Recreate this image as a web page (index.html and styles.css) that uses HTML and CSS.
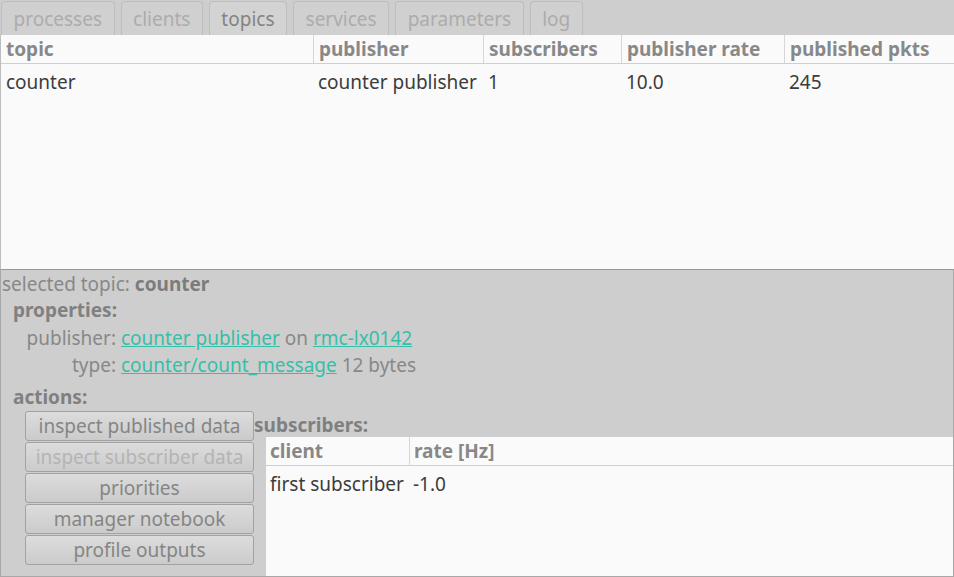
FILE: index.html
```html
<!DOCTYPE html>
<html lang="en">
<head>
<meta charset="UTF-8" />
<title>topics</title>
<link rel="stylesheet" href="styles.css">
</head>
<body>

<div class="tabs">
  <div class="tab">processes</div>
  <div class="tab">clients</div>
  <div class="tab active">topics</div>
  <div class="tab">services</div>
  <div class="tab">parameters</div>
  <div class="tab">log</div>
</div>

<div class="topics">
  <div class="row head">
    <div class="c1">topic</div>
    <div class="c2">publisher</div>
    <div class="c3">subscribers</div>
    <div class="c4">publisher rate</div>
    <div class="c5">published pkts</div>
  </div>
  <div class="row">
    <div class="c1">counter</div>
    <div class="c2">counter publisher</div>
    <div class="c3">1</div>
    <div class="c4">10.0</div>
    <div class="c5">245</div>
  </div>
</div>

<div class="detail">
  <div class="selected">selected topic: <b>counter</b></div>
  <div class="section">properties:</div>
  <div class="props">
    <span class="key">publisher:</span>
    <span><a href="#">counter publisher</a> on <a href="#">rmc-lx0142</a></span>
    <span class="key">type:</span>
    <span><a href="#">counter/count_message</a> 12 bytes</span>
  </div>
  <div class="section">actions:</div>
  <div class="lower">
    <div class="buttons">
      <button>inspect published data</button>
      <button disabled>inspect subscriber data</button>
      <button>priorities</button>
      <button>manager notebook</button>
      <button>profile outputs</button>
    </div>
    <div class="subs">
      <div class="subs-title">subscribers:</div>
      <div class="subs-table">
        <div class="srow head">
          <div class="s1">client</div>
          <div class="s2">rate [Hz]</div>
        </div>
        <div class="srow">
          <div class="s1">first subscriber</div>
          <div class="s2">-1.0</div>
        </div>
      </div>
    </div>
  </div>
</div>

</body>
</html>
```

FILE: styles.css
```css
body { margin: 0; background: #cecece; font-family: "Noto Sans", "Open Sans", sans-serif; font-size: 19px; color: #888; height: 577px; overflow: hidden; }

.tabs { display: flex; height: 35px; padding-left: 1px; gap: 6px; align-items: flex-end; }
.tab { height: 34px; box-sizing: border-box; border: 1px solid #bdbdbd; border-bottom: none; border-radius: 4px 4px 0 0; padding: 0 11.5px; line-height: 34px; color: #acacac; background: #d0d0d0; }
.tab.active { color: #838383; background: #d3d3d3; }

.topics { height: 235px; background: #fafafa; border-left: 1px solid #bdbdbd; border-bottom: 1px solid #999; box-sizing: border-box; }
.row { display: flex; height: 36px; align-items: center; color: #3c3c3c; }
.row.head { height: 28px; border-bottom: 1px solid #cfcfcf; color: #888; font-weight: bold; }
.row > div { box-sizing: border-box; padding-left: 5px; height: 100%; display: flex; align-items: center; }
.row.head > div + div { border-left: 1px solid #d6d6d6; }
.c1 { width: 312px; }
.c2 { width: 170px; }
.c3 { width: 138px; }
.c4 { width: 163px; }
.c5 { flex: 1; }

.detail { height: 307px; box-sizing: border-box; border-left: 1px solid #a8a8a8; border-right: 1px solid #a8a8a8; border-bottom: 1px solid #a8a8a8; display: flex; flex-direction: column; }
.selected { height: 27px; line-height: 29px; padding-left: 1px; }
.selected b { color: #7c7c7c; }
.section { height: 27px; line-height: 27px; padding-left: 12px; font-weight: bold; color: #808080; }
.props { display: grid; grid-template-columns: 120px auto; justify-content: start; padding: 0 0 6px 0; }
.props span { height: 27px; line-height: 28px; white-space: pre; }
.props .key { text-align: right; padding-right: 5px; }
.props a { color: #36bfa8; }

.lower { display: flex; flex: 1; align-items: stretch; }
.buttons { display: flex; flex-direction: column; gap: 1px; padding: 0 0 0 24px; width: 229px; }
.buttons button { height: 30px; font-family: inherit; font-size: 19px; color: #858585; border: 1px solid #a2a2a2; border-radius: 3px; background: linear-gradient(#dcdcdc, #cbcbcb); padding: 0; }
.buttons button:disabled { color: #b4b4b4; }

.subs { flex: 1; display: flex; flex-direction: column; }
.subs-title { height: 26px; line-height: 28px; font-weight: bold; color: #808080; }
.subs-table { flex: 1; margin-left: 12px; background: #fafafa; }
.srow { display: flex; height: 36px; align-items: center; color: #3c3c3c; }
.srow.head { height: 28px; border-bottom: 1px solid #cfcfcf; color: #888; font-weight: bold; }
.srow > div { box-sizing: border-box; padding-left: 4px; height: 100%; display: flex; align-items: center; }
.srow.head > div + div { border-left: 1px solid #d6d6d6; }
.s1 { width: 143px; }
.s2 { flex: 1; }
```
